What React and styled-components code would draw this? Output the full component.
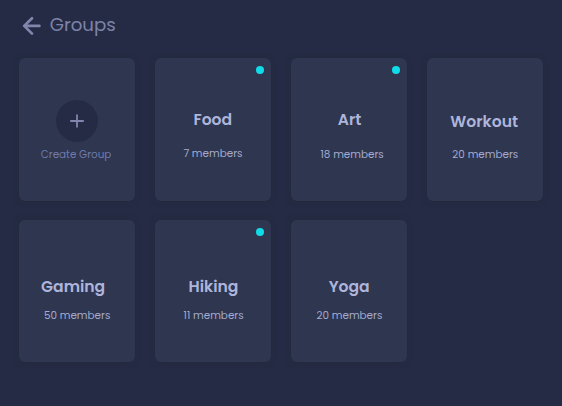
import React from "react";
import styled, { createGlobalStyle } from "styled-components";

const GlobalStyle = createGlobalStyle`
  * { box-sizing: border-box; }
  body { margin: 0; background: #262b45; }
`;

const Page = styled.main`
  width: 562px;
  height: 406px;
  overflow: hidden;
  background: #262b45;
  font-family: Poppins, Inter, sans-serif;
`;

const Header = styled.header`
  display: flex;
  align-items: center;
  height: 58.4px;
  padding: 0 0 8px 22px;
`;

const BackArrow = styled.svg`
  width: 20px;
  height: 20px;
  margin-right: 7.8px;
  margin-top: 2px;
`;

const Heading = styled.h1`
  margin: 0;
  color: #7c84aa;
  font-size: 18.2px;
  font-weight: 400;
  line-height: 28px;
`;

const Grid = styled.section`
  display: grid;
  grid-template-columns: repeat(4, 116.4px);
  grid-auto-rows: 142.2px;
  gap: 19.5px;
  padding-left: 18.9px;
`;

const Card = styled.article`
  position: relative;
  display: flex;
  flex-direction: column;
  align-items: flex-start;
  border-radius: 6px;
  background: #2f3650;
  box-shadow: 0 0 5px 1px rgba(33, 42, 58, 0.8);
`;

const CreateCard = styled(Card)`
  align-items: center;
  padding-top: 41.7px;
`;

const PlusCircle = styled.button`
  display: flex;
  align-items: center;
  justify-content: center;
  width: 42px;
  height: 42px;
  padding: 0;
  border: 0;
  border-radius: 50%;
  background: #262b45;
`;

const CreateLabel = styled.span`
  margin: 5px 0 0 -2px;
  color: #707bab;
  font-size: 10.4px;
  line-height: 16px;
  white-space: nowrap;
`;

const Title = styled.h2`
  margin: ${(p) => p.$top}px 0 0 ${(p) => p.$left}px;
  color: #adb5db;
  font-size: 15.6px;
  font-weight: 600;
  line-height: 20px;
  white-space: nowrap;
`;

const Members = styled.p`
  margin: ${(p) => p.$top}px 0 0 ${(p) => p.$left}px;
  color: #a2aace;
  font-size: 10.4px;
  font-weight: 400;
  line-height: 16px;
  white-space: nowrap;
`;

const Dot = styled.span`
  position: absolute;
  top: 7.7px;
  right: 7.4px;
  width: 8px;
  height: 8px;
  border-radius: 50%;
  background: #10dce8;
`;

const groups = [
  { name: "Food", members: 7, active: true, title: [51.5, 38.6], count: [16, 28.6] },
  { name: "Art", members: 18, active: true, title: [51.5, 47.2], count: [17, 29.8] },
  { name: "Workout", members: 20, title: [53.6, 23.8], count: [14.9, 25.8] },
  { name: "Gaming", members: 50, title: [56.6, 22.2], count: [11, 25] },
  { name: "Hiking", members: 11, active: true, title: [56.6, 33.8], count: [11, 28.8] },
  { name: "Yoga", members: 20, title: [56.6, 38], count: [11, 25.8] },
];

function GroupCard({ group }) {
  const [titleTop, titleLeft] = group.title;
  const [countTop, countLeft] = group.count;
  return (
    <Card>
      {group.active && <Dot />}
      <Title $top={titleTop} $left={titleLeft}>{group.name}</Title>
      <Members $top={countTop} $left={countLeft}>{group.members} members</Members>
    </Card>
  );
}

export default function App() {
  return (
    <Page>
      <GlobalStyle />
      <Header>
        <BackArrow viewBox="0 0 20 20" fill="none" stroke="#8086ad" strokeWidth="2.7" strokeLinecap="round" strokeLinejoin="round">
          <path d="M17.4 9.9H2.2M10 2.2L2.2 9.9L10 17.6" />
        </BackArrow>
        <Heading>Groups</Heading>
      </Header>
      <Grid>
        <CreateCard>
          <PlusCircle aria-label="Create group">
            <svg width="14" height="14" viewBox="0 0 14 14" stroke="#8086ad" strokeWidth="1.8">
              <path d="M7 0.4V13.6M0.2 7H13.8" />
            </svg>
          </PlusCircle>
          <CreateLabel>Create Group</CreateLabel>
        </CreateCard>
        {groups.map((group) => (
          <GroupCard key={group.name} group={group} />
        ))}
      </Grid>
    </Page>
  );
}
